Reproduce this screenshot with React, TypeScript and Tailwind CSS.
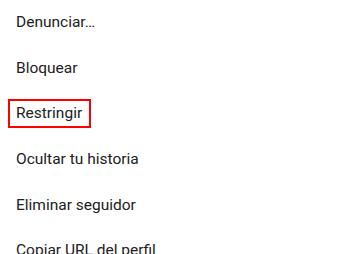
import React from 'react';

const items = [
  'Denunciar…',
  'Bloquear',
  'Restringir',
  'Ocultar tu historia',
  'Eliminar seguidor',
  'Copiar URL del perfil',
];

export default function App() {
  return (
    <div className="w-[350px] h-[254px] overflow-hidden bg-white font-['Roboto',sans-serif] text-[15.5px] text-[#212121]">
      <ul>
        {items.map((label) => (
          <li key={label} className="h-[45.6px] flex items-center px-[16px]">
            {label === 'Restringir' ? (
              <span className="-ml-[8px] border-2 border-[#ff0000] px-[6px] py-[3px] pr-[7px] leading-[19px]">{label}</span>
            ) : (
              <span className="leading-[19px]">{label}</span>
            )}
          </li>
        ))}
      </ul>
    </div>
  );
}
